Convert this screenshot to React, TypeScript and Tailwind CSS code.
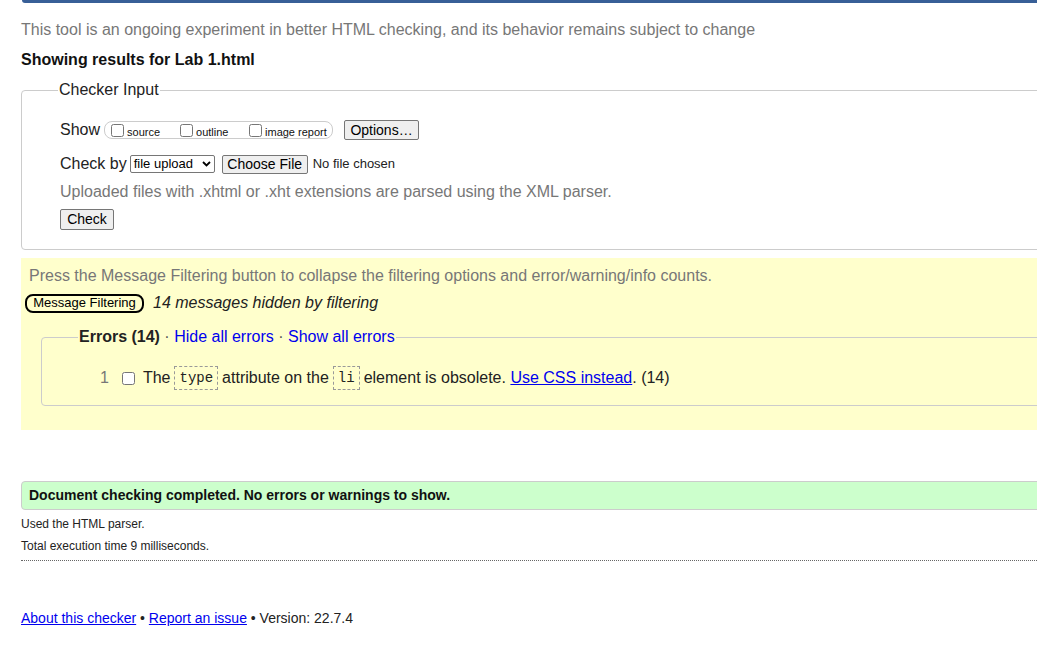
import React from "react";

function Box({ label, width }: { label: string; width?: string }) {
  return (
    <label className={`flex items-center ${width ?? ""}`}>
      <input type="checkbox" className="m-0 ml-[3px] mr-[3px] h-[13px] w-[13px]" />
      <span className="text-[11px] leading-[13px] mt-[4px] text-[#111]">{label}</span>
    </label>
  );
}

function Btn({ children, className }: { children: React.ReactNode; className?: string }) {
  return (
    <span
      className={`inline-flex items-center justify-center bg-[#efefef] border border-[#767676] rounded-[2px] text-[14px] text-black ${className ?? ""}`}
    >
      {children}
    </span>
  );
}

function Code({ children }: { children: React.ReactNode }) {
  return (
    <code className="mx-[4px] inline-flex items-center h-[24px] px-[4px] border border-dashed border-[#999] font-['Liberation_Mono','DejaVu_Sans_Mono',monospace] text-[14px] text-[#222]">
      {children}
    </code>
  );
}

export default function App() {
  return (
    <div className="w-[1037px] h-[659px] overflow-hidden bg-white font-['Liberation_Sans',Arial,sans-serif] text-[#222]">
      <div className="ml-[22px] h-[3px] bg-[#385f97] rounded-bl-[4px]" />
      <div className="ml-[21px] w-[1100px]">
        <p className="mt-[18px] text-[16px] leading-[18px] text-[#777]">
          This tool is an ongoing experiment in better HTML checking, and its behavior remains subject to change
        </p>
        <p className="mt-[12px] text-[16px] leading-[18px] font-bold text-[#111]">
          Showing results for Lab 1.html
        </p>

        <fieldset className="mt-[12px] border border-[#ccc] rounded-[4px]">
          <legend className="ml-[36px] px-[1px] text-[16px] leading-[18px] text-[#222]">Checker Input</legend>
          <div className="pl-[38px] pb-[19px]">
            <div className="mt-[21px] flex items-center h-[20px]">
              <span className="text-[16px] leading-[18px]">Show</span>
              <div className="ml-[4px] flex items-center h-[18px] w-[229px] border border-[#ccc] rounded-[8px] pl-[3px]">
                <Box label="source" width="w-[69px]" />
                <Box label="outline" width="w-[69px]" />
                <Box label="image report" />
              </div>
              <Btn className="ml-[11px] h-[20px] w-[75px]">Options…</Btn>
            </div>
            <div className="mt-[14px] flex items-center h-[20px]">
              <span className="text-[16px] leading-[18px]">Check by</span>
              <span className="ml-[3px] inline-flex items-center justify-between h-[18px] w-[85px] border border-[#767676] rounded-[2px] pl-[3px] pr-[3px] text-[13px] text-black">
                file upload
                <svg width="9" height="6" viewBox="0 0 9 6">
                  <path d="M1 1l3.5 3.5L8 1" stroke="#000" strokeWidth="1.8" fill="none" />
                </svg>
              </span>
              <Btn className="ml-[7px] h-[19px] w-[86px]">Choose File</Btn>
              <span className="ml-[5px] text-[13px] text-[#222]">No file chosen</span>
            </div>
            <p className="mt-[9px] text-[16px] leading-[18px] text-[#777]">
              Uploaded files with .xhtml or .xht extensions are parsed using the XML parser.
            </p>
            <div className="mt-[8px] flex">
              <Btn className="h-[21px] w-[54px]">Check</Btn>
            </div>
          </div>
        </fieldset>

        <div className="mt-[8px] bg-[#ffffcc] pt-[9px] pb-[24px]">
          <p className="pl-[8px] text-[16px] leading-[18px] text-[#777]">
            Press the Message Filtering button to collapse the filtering options and error/warning/info counts.
          </p>
          <div className="mt-[6px] flex items-center">
            <span className="ml-[4px] inline-flex items-center h-[19px] w-[119px] justify-center border-2 border-black rounded-[8px] text-[13px] text-black">
              Message Filtering
            </span>
            <span className="ml-[9px] text-[16px] italic text-[#222]">14 messages hidden by filtering</span>
          </div>
          <fieldset className="mt-[13px] ml-[20px] border border-[#ccc] rounded-[4px]">
            <legend className="ml-[36px] px-[1px] text-[16px] leading-[18px]">
              <span className="font-bold text-[#222]">Errors (14)</span>
              <span className="text-[#555]"> · </span>
              <span className="text-[#0000ee]">Hide all errors</span>
              <span className="text-[#555]"> · </span>
              <span className="text-[#0000ee]">Show all errors</span>
            </legend>
            <div className="pl-[58px] pb-[15px]">
              <div className="mt-[20px] flex items-center text-[16px] leading-[18px]">
                <span className="text-[#777]">1</span>
                <input type="checkbox" className="m-0 ml-[13px] h-[13px] w-[13px]" />
                <span className="ml-[8px]">The</span>
                <Code>type</Code>
                <span>attribute on the</span>
                <Code>li</Code>
                <span>
                  element is obsolete. <span className="text-[#0000ee] underline">Use CSS instead</span>. (14)
                </span>
              </div>
            </div>
          </fieldset>
        </div>

        <div className="mt-[51px] h-[29px] flex items-center bg-[#ccffcc] border border-[#ccc] rounded-l-[4px] pl-[7px]">
          <span className="text-[14px] font-bold text-[#111]">
            Document checking completed. No errors or warnings to show.
          </span>
        </div>
        <p className="mt-[7px] text-[12px] leading-[14px]">Used the HTML parser.</p>
        <p className="mt-[8px] text-[12px] leading-[14px]">Total execution time 9 milliseconds.</p>
        <div className="mt-[7px] border-b border-dotted border-[#666]" />

        <p className="mt-[49px] text-[14px] leading-[16px]">
          <span className="text-[#0000ee] underline">About this checker</span> •{" "}
          <span className="text-[#0000ee] underline">Report an issue</span> • Version: 22.7.4
        </p>
      </div>
    </div>
  );
}
